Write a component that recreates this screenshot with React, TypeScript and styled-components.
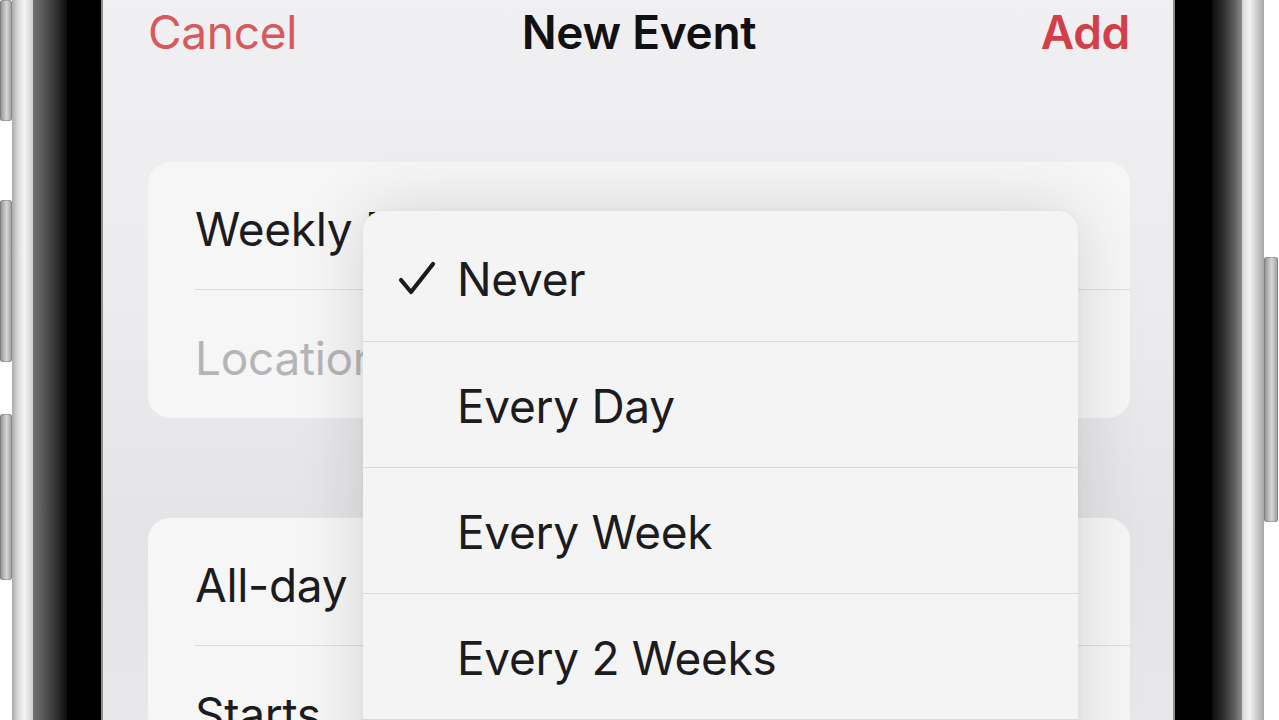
import styled, { createGlobalStyle } from "styled-components";

const GlobalStyle = createGlobalStyle`
  html, body {
    margin: 0;
    padding: 0;
    background: #ffffff;
    overflow: hidden;
  }
`;

type Piece = { h: number; key?: boolean };

const leftKeys: Piece[] = [
  { h: 121, key: true },
  { h: 79 },
  { h: 162, key: true },
  { h: 52 },
  { h: 166, key: true },
  { h: 140 },
];

const rightKeys: Piece[] = [{ h: 257 }, { h: 265, key: true }, { h: 198 }];

const repeatOptions = ["Never", "Every Day", "Every Week", "Every 2 Weeks", "Every Month"];

const App = () => {
  return (
    <>
      <GlobalStyle />
      <Phone>
        <KeyRail $side="left">
          {leftKeys.map((p, i) => (
            <Key key={i} $h={p.h} $on={!!p.key} />
          ))}
        </KeyRail>
        <Frame $side="left" />
        <Metal $side="left" />
        <Bezel $w={36} $side="left" />
        <Screen>
          <NavBar>
            <NavButton>Cancel</NavButton>
            <Title>New Event</Title>
            <NavButton $strong $end>
              Add
            </NavButton>
          </NavBar>

          <Card $top={98}>
            <Row>
              <RowInner $divider>
                <Label>Weekly Meeting</Label>
              </RowInner>
            </Row>
            <Row>
              <RowInner>
                <Label $muted>Location or Video Call</Label>
              </RowInner>
            </Row>
          </Card>

          <Card $top={100}>
            <Row>
              <RowInner $divider>
                <Label>All-day</Label>
              </RowInner>
            </Row>
            <Row>
              <RowInner>
                <Label>Starts</Label>
              </RowInner>
            </Row>
          </Card>

          <Menu>
            {repeatOptions.map((opt, i) => (
              <Option key={opt}>
                <CheckSlot>
                  {i === 0 && (
                    <svg width="38" height="36" viewBox="0 0 38 36">
                      <polyline
                        points="3,19 13,31 35,3"
                        fill="none"
                        stroke="#1b1b1d"
                        strokeWidth="4.2"
                        strokeLinecap="round"
                        strokeLinejoin="round"
                      />
                    </svg>
                  )}
                </CheckSlot>
                <OptionText>{opt}</OptionText>
              </Option>
            ))}
          </Menu>
        </Screen>
        <Bezel $w={39} $side="right" />
        <Metal $side="right" />
        <Frame $side="right" />
        <KeyRail $side="right">
          {rightKeys.map((p, i) => (
            <Key key={i} $h={p.h} $on={!!p.key} />
          ))}
        </KeyRail>
      </Phone>
    </>
  );
};

const Phone = styled.div`
  display: flex;
  width: 1279px;
  height: 720px;
  overflow: hidden;
`;

const KeyRail = styled.div<{ $side: "left" | "right" }>`
  flex: none;
  width: ${(p) => (p.$side === "left" ? 12 : 14)}px;
  display: flex;
  flex-direction: column;
  background: #ffffff;
`;

const Key = styled.div<{ $h: number; $on: boolean }>`
  flex: none;
  height: ${(p) => p.$h}px;
  background: ${(p) =>
    p.$on
      ? "linear-gradient(90deg, #8c8c8c 0%, #bdbdbd 35%, #d6d6d6 55%, #9a9a9a 100%)"
      : "#ffffff"};
  border-radius: ${(p) => (p.$on ? "3px" : "0")};
  box-shadow: ${(p) => (p.$on ? "inset 0 0 0 1px rgba(90, 90, 90, 0.35)" : "none")};
`;

const Frame = styled.div<{ $side: "left" | "right" }>`
  flex: none;
  width: ${(p) => (p.$side === "left" ? 21 : 22)}px;
  background: ${(p) =>
    p.$side === "left"
      ? "linear-gradient(90deg, #a9a9a9 0%, #dcdcdc 30%, #f4f4f4 60%, #cfcfcf 100%)"
      : "linear-gradient(90deg, #d4d4d4 0%, #f3f3f3 35%, #c9c9c9 70%, #a7a7a7 100%)"};
`;

const Metal = styled.div<{ $side: "left" | "right" }>`
  flex: none;
  width: ${(p) => (p.$side === "left" ? 34 : 30)}px;
  background: ${(p) =>
    p.$side === "left"
      ? "linear-gradient(90deg, #707070 0%, #555555 35%, #2a2a2a 75%, #0c0c0c 100%)"
      : "linear-gradient(90deg, #0c0c0c 0%, #2c2c2c 35%, #5e5e5e 75%, #8a8a8a 100%)"};
`;

const Bezel = styled.div<{ $w: number; $side: "left" | "right" }>`
  flex: none;
  width: ${(p) => p.$w}px;
  background: #000000;
  box-sizing: border-box;
  border-${(p) => (p.$side === "left" ? "right" : "left")}: 2px solid #8e8e90;
`;

const Screen = styled.div`
  position: relative;
  flex: none;
  width: 1070px;
  height: 720px;
  box-sizing: border-box;
  padding: 0 43px 0 45px;
  overflow: hidden;
  background: linear-gradient(180deg, #f0f0f2 0%, #ececee 40%, #e4e4e7 75%, #e8e8ea 100%);
  font-family: Inter, "Noto Sans", sans-serif;
  color: #1c1c1e;
`;

const NavBar = styled.div`
  display: grid;
  grid-template-columns: 1fr auto 1fr;
  align-items: center;
  height: 64px;
  font-size: 46px;
  letter-spacing: -0.3px;
`;

const NavButton = styled.div<{ $strong?: boolean; $end?: boolean }>`
  color: ${(p) => (p.$strong ? "#d23f48" : "#d9585d")};
  font-weight: ${(p) => (p.$strong ? 600 : 400)};
  justify-self: ${(p) => (p.$end ? "end" : "start")};
`;

const Title = styled.div`
  font-weight: 600;
  color: #111113;
`;

const Card = styled.div<{ $top: number }>`
  margin-top: ${(p) => p.$top}px;
  background: #f6f6f7;
  border-radius: 22px;
  overflow: hidden;
`;

const Row = styled.div`
  height: 128px;
  padding-left: 47px;
`;

const RowInner = styled.div<{ $divider?: boolean }>`
  height: 100%;
  box-sizing: border-box;
  padding-top: 7px;
  display: flex;
  align-items: center;
  border-bottom: ${(p) => (p.$divider ? "1.5px solid #dcdcde" : "none")};
`;

const Label = styled.span<{ $muted?: boolean }>`
  font-size: 46px;
  letter-spacing: -0.3px;
  white-space: nowrap;
  color: ${(p) => (p.$muted ? "#b5b5b8" : "#1c1c1e")};
`;

const Menu = styled.div`
  position: absolute;
  left: 260px;
  top: 211px;
  width: 715px;
  background: #f4f4f4;
  border-radius: 20px;
  overflow: hidden;
  box-shadow: 0 0 70px rgba(0, 0, 0, 0.14), 0 0 6px rgba(0, 0, 0, 0.04);
`;

const Option = styled.div`
  height: 126px;
  box-sizing: border-box;
  display: flex;
  align-items: center;
  padding-left: 35px;
  padding-top: 2px;
  border-bottom: 1.5px solid #dadadc;

  &:first-child {
    height: 131px;
    padding-top: 6px;
  }
`;

const CheckSlot = styled.div`
  width: 38px;
  height: 36px;
  margin-right: 21px;
  display: flex;
  align-items: center;
`;

const OptionText = styled.span`
  font-size: 46px;
  letter-spacing: -0.3px;
  color: #1c1c1e;
`;

export default App;
